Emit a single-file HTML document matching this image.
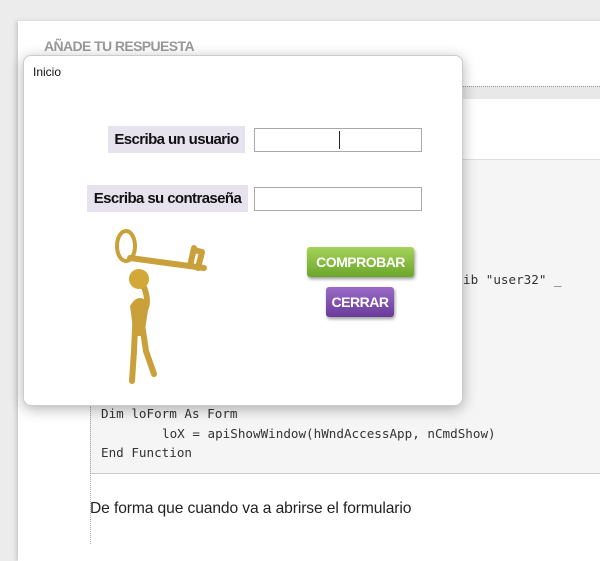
<!DOCTYPE html>
<html><head><meta charset="utf-8"><style>
body{margin:0;width:600px;height:544px;background:#ececec;position:relative;overflow:hidden;font-family:"Liberation Sans",sans-serif}
.card{position:absolute;left:18px;top:21px;width:590px;height:540px;background:#fff;box-shadow:-2px 0 4px rgba(0,0,0,.15)}
.h{position:absolute;left:44px;top:38px;font-size:14px;font-weight:bold;color:#9a9a9a;letter-spacing:-0.6px}
.band{position:absolute;left:462px;top:86px;width:140px;height:12px;background:#e8e8e8;border-top:1px dotted #999}
.code{position:absolute;left:90px;top:159px;width:520px;height:313px;background:#f5f5f5;border-top:1px solid #ddd;border-bottom:1px solid #ccc;border-left:1px solid #ddd}
.mono{position:absolute;font-family:"DejaVu Sans Mono","Liberation Mono",monospace;font-size:12.6px;color:#333;white-space:pre}
.vline{position:absolute;left:90px;top:98px;height:446px;border-left:1px dotted #aaa}
.p{position:absolute;left:90px;top:500px;font-size:15.6px;color:#222;letter-spacing:-0.1px}
.dlg{position:absolute;left:23px;top:55px;width:438px;height:349px;background:#fff;border:1px solid #ccc;border-radius:8px;box-shadow:0 3px 14px rgba(0,0,0,.3)}
.lbl{position:absolute;background:#e7e3ee;font-weight:bold;font-size:15px;color:#111;height:27px;line-height:27px;text-align:center;letter-spacing:-0.6px}
.inp{position:absolute;left:230px;width:166px;height:22px;border:1px solid #aaa;background:#fff}
.btn{position:absolute;color:#fff;font-weight:bold;font-size:14px;letter-spacing:-0.5px;text-align:center;border-radius:3px;box-shadow:1px 2px 3px rgba(0,0,0,.4)}
</style></head><body>
<div class="card"></div>
<div class="h">AÑADE TU RESPUESTA</div>
<div class="band"></div>
<div class="code"></div>
<div class="vline"></div>
<div class="mono" style="left:463px;top:272px">ib "user32" _</div>
<div class="mono" style="left:101px;top:406px">Dim loForm As Form</div>
<div class="mono" style="left:162px;top:426px">loX = apiShowWindow(hWndAccessApp, nCmdShow)</div>
<div class="mono" style="left:101px;top:445px">End Function</div>
<div class="p">De forma que cuando va a abrirse el formulario</div>
<div class="dlg">
<div style="position:absolute;left:9px;top:9px;font-size:12px;color:#111">Inicio</div>
<div class="lbl" style="left:84px;top:70px;width:137px">Escriba un usuario</div>
<div class="inp" style="top:72px"><div style="position:absolute;left:84px;top:2px;width:1px;height:18px;background:#222"></div></div>
<div class="lbl" style="left:63px;top:129px;width:161px">Escriba su contraseña</div>
<div class="inp" style="top:131px"></div>
<div class="btn" style="left:283px;top:191px;width:107px;height:30px;line-height:30px;background:linear-gradient(#a6d35a,#6aa62a)">COMPROBAR</div>
<div class="btn" style="left:302px;top:231px;width:68px;height:30px;line-height:30px;background:linear-gradient(#9a6cc8,#6a3a9a)">CERRAR</div>
<svg style="position:absolute;left:70px;top:170px" width="130" height="165" viewBox="0 0 130 165">
<g fill="none" stroke="#c9a03a" stroke-linecap="round">
<ellipse cx="32" cy="20" rx="9" ry="15" stroke-width="4"/>
<path d="M36 32 L110 42" stroke-width="6"/>
<path d="M96 40 L100 22 M104 42 L108 26 M100 24 L108 26" stroke-width="6"/>
<path d="M45 50 Q58 75 50 85" stroke-width="6"/>
<path d="M42 80 L40 125 L38 155 M46 85 L52 125 L60 148" stroke-width="6"/>
</g>
<circle cx="45" cy="53" r="10" fill="#d4a837"/>
<path d="M36 80 Q45 65 55 78 L50 110 L40 110Z" fill="#c9a03a"/>
</svg>
</div>
</body></html>
